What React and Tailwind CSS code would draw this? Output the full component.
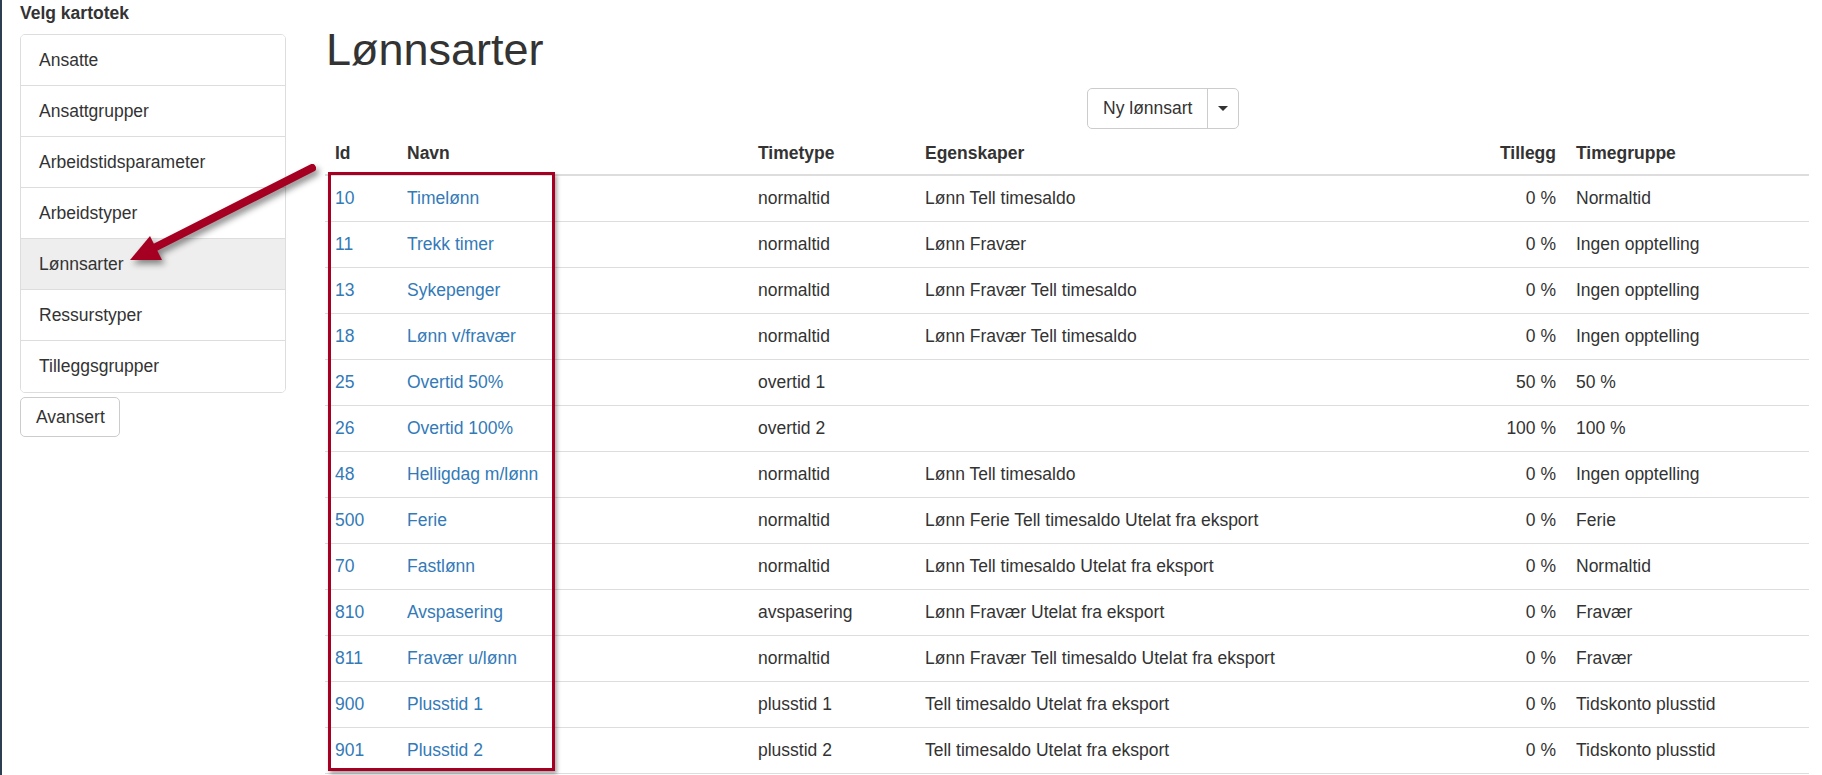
import React from "react";

const menu = [
  "Ansatte",
  "Ansattgrupper",
  "Arbeidstidsparameter",
  "Arbeidstyper",
  "Lønnsarter",
  "Ressurstyper",
  "Tilleggsgrupper",
];

const rows = [
  ["10", "Timelønn", "normaltid", "Lønn Tell timesaldo", "0 %", "Normaltid"],
  ["11", "Trekk timer", "normaltid", "Lønn Fravær", "0 %", "Ingen opptelling"],
  ["13", "Sykepenger", "normaltid", "Lønn Fravær Tell timesaldo", "0 %", "Ingen opptelling"],
  ["18", "Lønn v/fravær", "normaltid", "Lønn Fravær Tell timesaldo", "0 %", "Ingen opptelling"],
  ["25", "Overtid 50%", "overtid 1", "", "50 %", "50 %"],
  ["26", "Overtid 100%", "overtid 2", "", "100 %", "100 %"],
  ["48", "Helligdag m/lønn", "normaltid", "Lønn Tell timesaldo", "0 %", "Ingen opptelling"],
  ["500", "Ferie", "normaltid", "Lønn Ferie Tell timesaldo Utelat fra eksport", "0 %", "Ferie"],
  ["70", "Fastlønn", "normaltid", "Lønn Tell timesaldo Utelat fra eksport", "0 %", "Normaltid"],
  ["810", "Avspasering", "avspasering", "Lønn Fravær Utelat fra eksport", "0 %", "Fravær"],
  ["811", "Fravær u/lønn", "normaltid", "Lønn Fravær Tell timesaldo Utelat fra eksport", "0 %", "Fravær"],
  ["900", "Plusstid 1", "plusstid 1", "Tell timesaldo Utelat fra eksport", "0 %", "Tidskonto plusstid"],
  ["901", "Plusstid 2", "plusstid 2", "Tell timesaldo Utelat fra eksport", "0 %", "Tidskonto plusstid"],
];

const cols = "grid grid-cols-[72px_351px_167px_485px_166px_243px]";

const App = () => {
  return (
    <div className="relative flex min-h-screen bg-white border-l-2 border-[#2c3e50] font-['Liberation_Sans',Arial,sans-serif] text-[#333] text-[17.5px] leading-[25px]">
      {/* sidebar */}
      <div className="w-[266px] ml-[18px] shrink-0">
        <div className="font-bold pt-[1px] mb-[8px]">Velg kartotek</div>
        <div className="border border-[#ddd] rounded-[5px] overflow-hidden">
          {menu.map((m, i) => (
            <div
              key={m}
              className={
                "h-[51px] flex items-center px-[18px] " +
                (i < menu.length - 1 ? "border-b border-[#ddd] " : "h-[50px] ") +
                (m === "Lønnsarter" ? "bg-[#eee]" : "bg-white")
              }
            >
              {m}
            </div>
          ))}
        </div>
        <button className="mt-[4px] h-[40px] w-[100px] border border-[#ccc] rounded-[5px] bg-white text-left pl-[15px]">
          Avansert
        </button>
      </div>

      {/* main */}
      <div className="relative ml-[39px] w-[1484px] shrink-0">
        <h1 className="mt-[25px] mb-[13px] ml-[1px] text-[45px] leading-[50px] font-normal">Lønnsarter</h1>
        <div className="ml-[762px] inline-flex h-[41px] border border-[#ccc] rounded-[5px] bg-white">
          <button className="px-[15px] h-full">Ny lønnsart</button>
          <button className="w-[31px] h-full border-l border-[#ccc] flex items-center justify-center">
            <span className="block w-0 h-0 border-x-[5px] border-t-[5px] border-x-transparent border-t-[#333]" />
          </button>
        </div>

        <div>
          <div className={cols + " h-[47px] pt-[3px] items-center border-b-2 border-[#ddd] font-bold"}>
            <div className="px-[10px]">Id</div>
            <div className="px-[10px]">Navn</div>
            <div className="px-[10px]">Timetype</div>
            <div className="px-[10px]">Egenskaper</div>
            <div className="px-[10px] text-right">Tillegg</div>
            <div className="px-[10px]">Timegruppe</div>
          </div>
          {rows.map((r) => (
            <div key={r[0]} className={cols + " h-[46px] items-center border-b border-[#ddd]"}>
              <div className="px-[10px] text-[#337ab7]">{r[0]}</div>
              <div className="px-[10px] text-[#337ab7]">{r[1]}</div>
              <div className="px-[10px]">{r[2]}</div>
              <div className="px-[10px] whitespace-nowrap">{r[3]}</div>
              <div className="px-[10px] text-right">{r[4]}</div>
              <div className="px-[10px]">{r[5]}</div>
            </div>
          ))}
        </div>

        {/* highlight box */}
        <div className="absolute left-[3px] top-[172px] w-[227px] h-[599px] border-[3px] border-[#a50021] shadow-[2px_3px_4px_rgba(0,0,0,0.35)] pointer-events-none" />
      </div>

      {/* arrow */}
      <svg
        className="absolute left-[-2px] top-0 pointer-events-none drop-shadow-[3px_4px_3px_rgba(0,0,0,0.45)]"
        width="340"
        height="290"
        viewBox="0 0 340 290"
      >
        <line x1="312" y1="168" x2="150" y2="250" stroke="#a50021" strokeWidth="8" strokeLinecap="round" />
        <polygon points="130,260 150,236 162,260" fill="#a50021" />
      </svg>
    </div>
  );
};

export default App;
